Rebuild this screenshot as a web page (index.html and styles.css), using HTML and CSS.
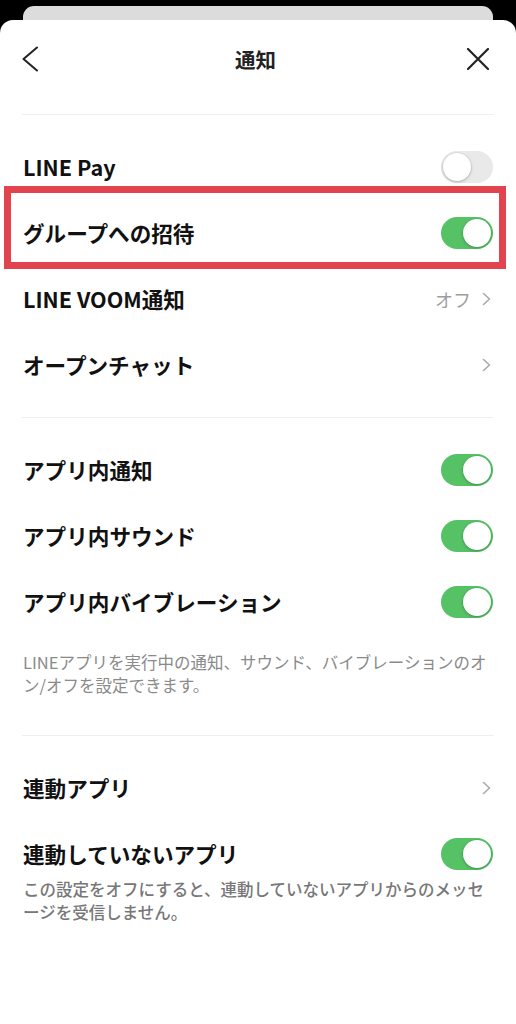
FILE: index.html
```html
<!DOCTYPE html>
<html lang="ja">
<head>
<meta charset="utf-8">
<title>通知</title>
<link rel="stylesheet" href="styles.css">
</head>
<body>
<div class="backcard"></div>
<div class="sheet">
  <header class="nav">
    <svg class="nav-back" width="18" height="26" viewBox="0 0 18 26"><path d="M15 1.5 L1.5 13 L15 24.5" fill="none" stroke="#222" stroke-width="2" stroke-linecap="round" stroke-linejoin="round"/></svg>
    <h1 class="nav-title">通知</h1>
    <svg class="nav-close" width="22" height="22" viewBox="0 0 22 22"><path d="M1 1 L21 21 M21 1 L1 21" fill="none" stroke="#222" stroke-width="2.2" stroke-linecap="round"/></svg>
  </header>

  <div class="content">
    <section class="group group-first">
      <div class="row">
        <span class="label">LINE Pay</span>
        <span class="toggle"><span class="knob"></span></span>
      </div>
      <div class="row highlight">
        <span class="label">グループへの招待</span>
        <span class="toggle on"><span class="knob"></span></span>
      </div>
      <div class="row">
        <span class="label">LINE VOOM通知</span>
        <span class="trail"><span class="value">オフ</span><svg class="chev" width="9" height="14" viewBox="0 0 9 14"><path d="M1.5 1.5 L7.5 7 L1.5 12.5" fill="none" stroke="#a9a9a9" stroke-width="1.6" stroke-linecap="round" stroke-linejoin="round"/></svg></span>
      </div>
      <div class="row">
        <span class="label">オープンチャット</span>
        <span class="trail"><svg class="chev" width="9" height="14" viewBox="0 0 9 14"><path d="M1.5 1.5 L7.5 7 L1.5 12.5" fill="none" stroke="#a9a9a9" stroke-width="1.6" stroke-linecap="round" stroke-linejoin="round"/></svg></span>
      </div>
    </section>

    <section class="group group-mid">
      <div class="row">
        <span class="label">アプリ内通知</span>
        <span class="toggle on"><span class="knob"></span></span>
      </div>
      <div class="row">
        <span class="label">アプリ内サウンド</span>
        <span class="toggle on"><span class="knob"></span></span>
      </div>
      <div class="row">
        <span class="label">アプリ内バイブレーション</span>
        <span class="toggle on"><span class="knob"></span></span>
      </div>
      <p class="note">LINEアプリを実行中の通知、サウンド、バイブレーションのオン/オフを設定できます。</p>
    </section>

    <section class="group group-last">
      <div class="row">
        <span class="label">連動アプリ</span>
        <span class="trail"><svg class="chev" width="9" height="14" viewBox="0 0 9 14"><path d="M1.5 1.5 L7.5 7 L1.5 12.5" fill="none" stroke="#a9a9a9" stroke-width="1.6" stroke-linecap="round" stroke-linejoin="round"/></svg></span>
      </div>
      <div class="row">
        <span class="label">連動していないアプリ</span>
        <span class="toggle on"><span class="knob"></span></span>
      </div>
      <p class="note note-strong">この設定をオフにすると、連動していないアプリからのメッセージを受信しません。</p>
    </section>
  </div>
</div>
</body>
</html>
```

FILE: styles.css
```css
html, body {
  margin: 0;
  padding: 0;
}

body {
  background: #000;
  font-family: "Noto Sans CJK JP", "Noto Sans", sans-serif;
  color: #111;
  width: 516px;
  overflow: hidden;
}

.backcard {
  height: 14px;
  margin: 6px 23px 0;
  background: #dcdcdc;
  border-radius: 11px 11px 0 0;
}

.sheet {
  background: #fff;
  border-radius: 13px 13px 0 0;
  min-height: 1004px;
}

.nav {
  height: 78px;
  display: grid;
  grid-template-columns: 1fr auto 1fr;
  align-items: center;
  padding: 0 27px 0 22px;
}

.nav-back {
  justify-self: start;
  display: block;
}

.nav-close {
  justify-self: end;
  display: block;
}

.nav-title {
  margin: 0;
  font-size: 20.5px;
  font-weight: 700;
  color: #222;
  line-height: 1;
}

.content {
  margin: 16px 22px 0;
}

.group {
  border-top: 1px solid #efefef;
  padding: 19px 0;
}

.group-mid {
  padding-bottom: 0;
}

.row {
  height: 66px;
  display: flex;
  align-items: center;
  justify-content: space-between;
}

.label {
  font-size: 21.6px;
  font-weight: 700;
  color: #111;
  line-height: 1;
  padding-left: 1px;
}

.highlight {
  position: relative;
}

.highlight::after {
  content: "";
  position: absolute;
  left: -18px;
  right: -12px;
  top: -14px;
  bottom: -3px;
  border: 7px solid #e2444f;
  pointer-events: none;
}

.toggle {
  position: relative;
  width: 52px;
  height: 32px;
  border-radius: 16px;
  background: #e9e9e9;
  box-sizing: border-box;
  flex: none;
  margin-right: 1px;
}

.toggle .knob {
  position: absolute;
  top: 2px;
  left: 2px;
  width: 28px;
  height: 28px;
  border-radius: 50%;
  background: #fff;
  box-shadow: 0 1px 3px rgba(0, 0, 0, 0.25), 0 0 0 0.5px rgba(0, 0, 0, 0.06);
}

.toggle.on {
  background: #55c266;
}

.toggle.on .knob {
  left: auto;
  right: 2px;
}

.trail {
  display: flex;
  align-items: center;
  gap: 11px;
  margin-right: 3px;
}

.value {
  font-size: 18px;
  color: #9d9d9d;
  line-height: 1;
}

.chev {
  display: block;
}

.note {
  margin: 16px 0 38px;
  font-size: 16.5px;
  line-height: 23px;
  color: #8a8a8a;
  line-break: loose;
  padding-left: 1px;
}

.note-strong {
  margin: -9px 0 0;
  color: #777;
  font-weight: 500;
}
```
